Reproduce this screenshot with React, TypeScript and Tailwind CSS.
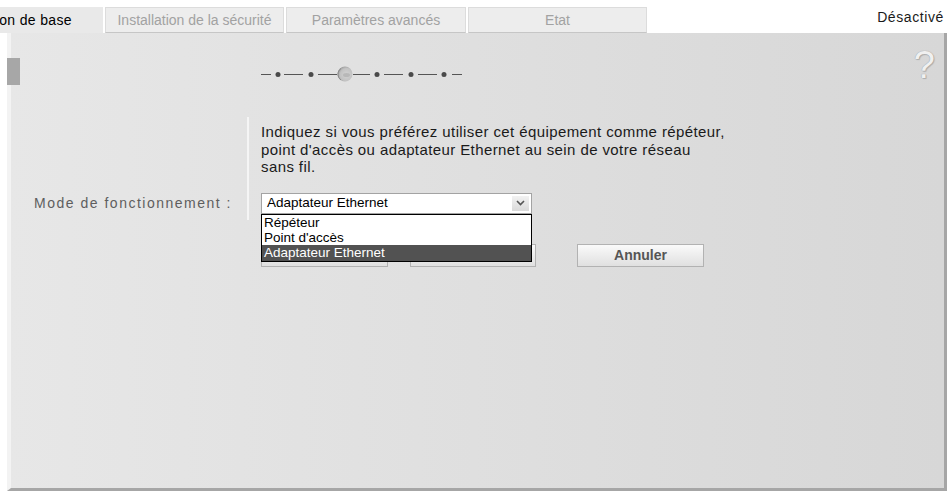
import React from "react";

const tabs = ["Installation de la sécurité", "Paramètres avancés", "Etat"];

function Steps() {
  const dashes = [
    [1, 11], [24, 43], [58, 77], [93, 110], [124, 143], [158, 177], [192, 202],
  ];
  const dots = [18, 51, 117, 151, 184];
  return (
    <svg width="203" height="27" viewBox="0 0 203 27">
      <defs>
        <radialGradient id="bub" cx="0.6" cy="0.55" r="0.6">
          <stop offset="0" stopColor="#d4d4d4" />
          <stop offset="0.7" stopColor="#c2c2c2" />
          <stop offset="1" stopColor="#9a9a9a" />
        </radialGradient>
      </defs>
      {dashes.map(([a, b], i) => (
        <line key={i} x1={a} y1="16.5" x2={b} y2="16.5" stroke="#555" strokeWidth="1" />
      ))}
      {dots.map((x) => (
        <circle key={x} cx={x} cy="16.5" r="2.5" fill="#4a4a4a" />
      ))}
      <circle cx="85" cy="16" r="7.5" fill="url(#bub)" />
      <path d="M81 10.5 A7 7 0 0 0 81 22" fill="none" stroke="#8a8a8a" strokeWidth="1" />
      <ellipse cx="86.5" cy="17" rx="3.5" ry="2" fill="#b8b8b8" />
    </svg>
  );
}

const btn =
  "h-[23px] border border-[#b2b2b2] bg-linear-to-b from-[#fafafa] to-[#e0e0e0] font-bold text-[#555]";

export default function App() {
  return (
    <div className="w-[951px] h-[492px] bg-white overflow-hidden font-['Liberation_Sans',Arial,sans-serif] text-[14px]">
      {/* tab strip */}
      <div className="flex h-[33px] items-end">
        <div className="w-[103px] h-[26px] bg-[#e9e9e9] overflow-hidden flex items-center justify-end pr-[31px] whitespace-nowrap tracking-[0.35px] text-black">
          Configuration de base
        </div>
        {tabs.map((t, i) => (
          <div
            key={t}
            className={
              "ml-[2px] h-[26px] bg-[#ededed] border-t border-x border-[#dcdcdc] border-b border-b-[#c6c6c6] flex items-center justify-center text-[#a2a2a2] " +
              (i === 1 ? "w-[180px]" : "w-[179px]")
            }
          >
            {t}
          </div>
        ))}
        <div className="ml-auto self-start mt-[9px] mr-[7px] leading-[16px] tracking-[0.6px] text-[#1a1a1a]">Désactivé</div>
      </div>

      {/* panel */}
      <div className="ml-[7px] w-[940px] h-[458px] border-r-[3px] border-r-[#a6a6a6] border-b-[3px] border-b-[#a6a6a6] border-l-[4px] border-l-[#f3f3f3] bg-linear-to-r from-[#e7e7e7] to-[#d7d7d7]">
        <div className="flex items-start pt-[25px]">
          <div className="-ml-[4px] w-[13px] h-[27px] bg-[#a7a7a7]" />
          <div className="ml-[240px]">
            <Steps />
          </div>
          <div className="ml-auto mr-[9px] -mt-[12px] text-[38px] leading-none text-[#f0f0f0] [text-shadow:0_0_1px_#8a8a8a,1px_1px_1px_#b0b0b0]">
            ?
          </div>
        </div>

        <div className="flex mt-[32px]">
          <div className="w-[236px] pt-[78px] pr-[15px] text-right leading-[17.5px] tracking-[1.5px] text-[#5e5e5e]">
            Mode de fonctionnement :
          </div>
          <div className="w-[2px] h-[103px] bg-[#f5f5f5]" />
          <div className="ml-[12px] pt-[6px]">
            <p className="text-[15px] leading-[17.5px] tracking-[0.4px] text-[#1a1a1a]">
              Indiquez si vous préférez utiliser cet équipement comme répéteur,
              <br />
              point d'accès ou adaptateur Ethernet au sein de votre réseau
              <br />
              sans fil.
            </p>

            <div className="relative mt-[17px] w-[271px]">
              <div className="h-[21px] border border-[#a3a3a3] bg-white flex items-center pl-[5px] text-[13.5px] text-black">
                Adaptateur Ethernet
                <div className="ml-auto mr-[2px] w-[17px] h-[15px] bg-linear-to-b from-[#f2f2f2] to-[#dadada] flex items-center justify-center">
                  <svg width="9" height="6" viewBox="0 0 9 6">
                    <path d="M1 1 L4.5 4.5 L8 1" fill="none" stroke="#555" strokeWidth="1.6" />
                  </svg>
                </div>
              </div>
              <div className="absolute z-10 top-[21px] left-0 w-[271px] border border-black bg-white text-[13.5px] leading-[15px]">
                <div className="pl-[2px] text-black">Répéteur</div>
                <div className="pl-[2px] text-black">Point d'accès</div>
                <div className="pl-[2px] h-[16px] bg-[#525252] text-white">Adaptateur Ethernet</div>
              </div>
            </div>

            <div className="flex mt-[30px]">
              <button aria-label="Précédent" className={btn + " w-[127px]"} />
              <button aria-label="Suivant" className={btn + " ml-[22px] w-[126px]"} />
              <button className={btn + " ml-[41px] w-[127px]"}>Annuler</button>
            </div>
          </div>
        </div>
      </div>
    </div>
  );
}
